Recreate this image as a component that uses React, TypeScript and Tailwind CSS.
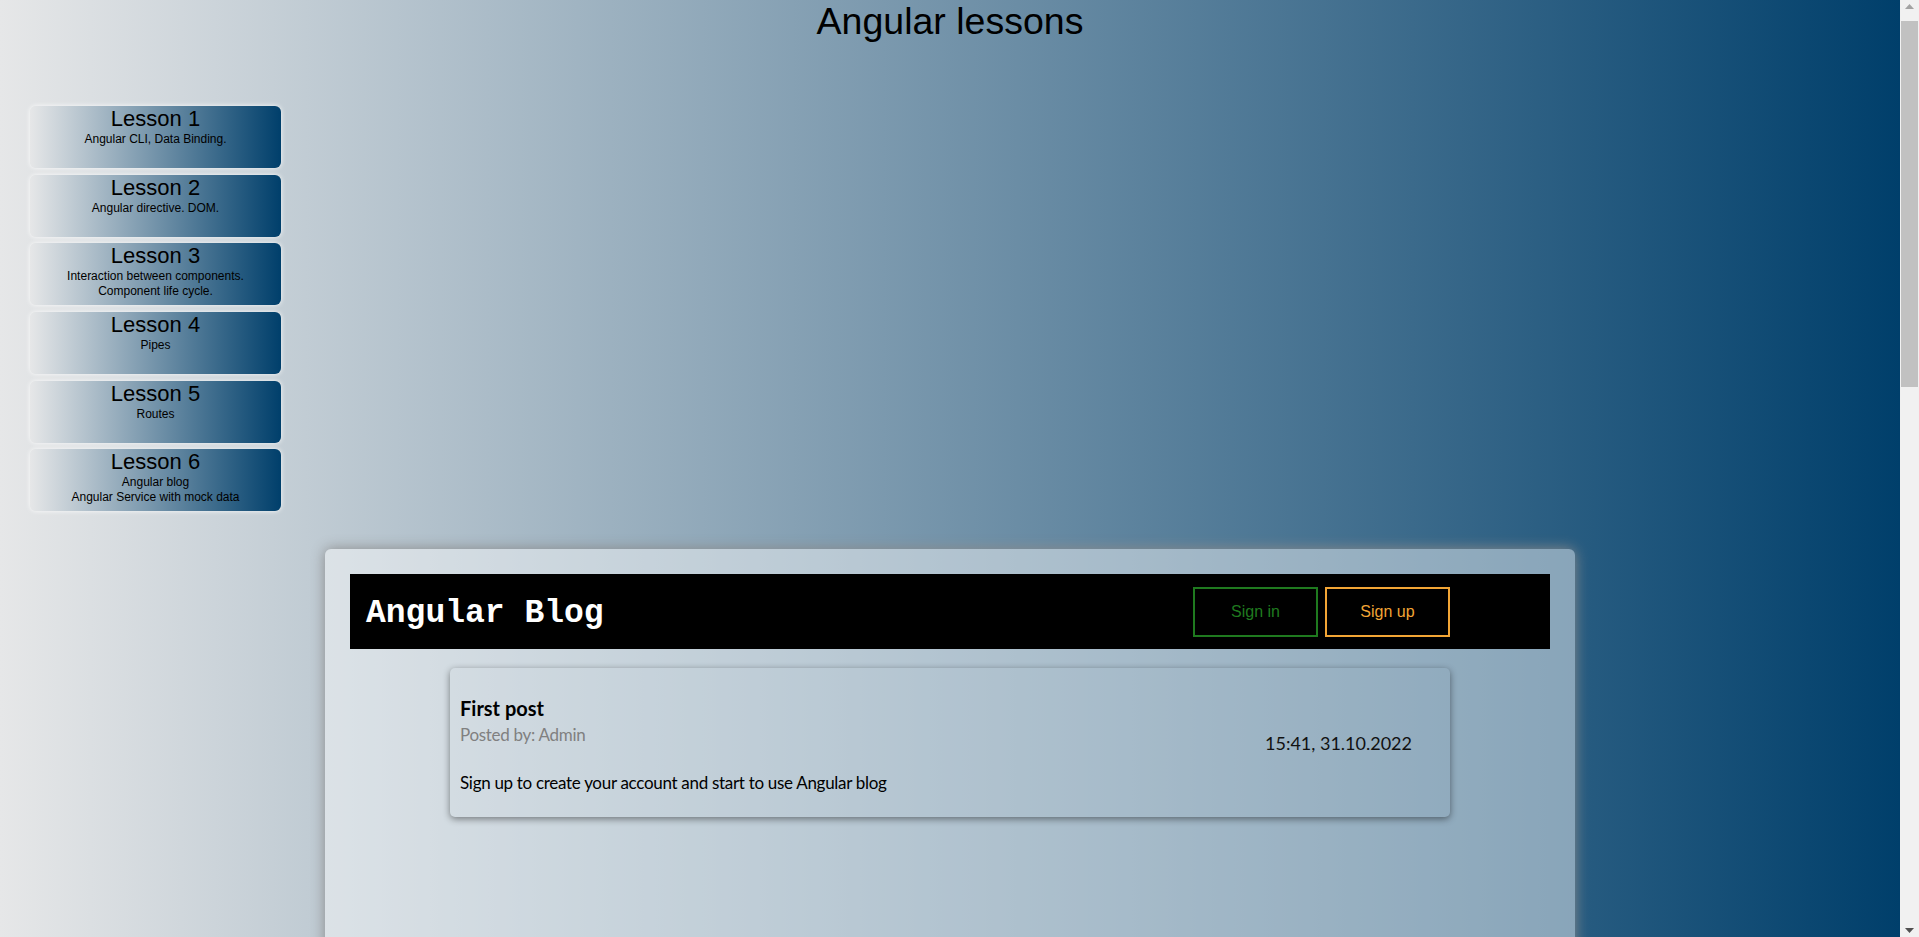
import React from "react";

const lessons: { title: string; lines: string[] }[] = [
  { title: "Lesson 1", lines: ["Angular CLI, Data Binding."] },
  { title: "Lesson 2", lines: ["Angular directive. DOM."] },
  { title: "Lesson 3", lines: ["Interaction between components.", "Component life cycle."] },
  { title: "Lesson 4", lines: ["Pipes"] },
  { title: "Lesson 5", lines: ["Routes"] },
  { title: "Lesson 6", lines: ["Angular blog", "Angular Service with mock data"] },
];

function Scrollbar() {
  return (
    <div className="fixed right-0 top-0 flex h-screen w-[19px] flex-col items-center bg-[#f1f1f1]">
      <svg width="9" height="5" viewBox="0 0 9 5" className="mt-[4px]">
        <polygon points="4.5,0 9,5 0,5" fill="#a3a3a3" />
      </svg>
      <div className="mt-[12px] h-[366px] w-[17px] bg-[#c1c1c1]" />
      <div className="flex-1" />
      <svg width="9" height="5" viewBox="0 0 9 5" className="mb-[4px]">
        <polygon points="0,0 9,0 4.5,5" fill="#505050" />
      </svg>
    </div>
  );
}

export default function App() {
  return (
    <div className="relative">
      <div
        className="mr-[19px] min-h-[2312px] bg-[linear-gradient(to_right,#e6e7e8,#003f6b)] text-black"
        style={{ fontFamily: '"Liberation Sans", Arial, sans-serif' }}
      >
        <div className="text-center text-[37.5px] leading-[42px]">Angular lessons</div>

        <div className="ml-[30px] mt-[64px] flex w-[251px] flex-col gap-[6.7px]">
          {lessons.map((l) => (
            <div
              key={l.title}
              className="h-[62px] rounded-[6px] bg-[linear-gradient(to_right,#e6e7e8,#003f6b)] text-center shadow-[0_0_5px_rgba(255,255,255,0.9)]"
            >
              <div className="text-[22px] leading-[26px]">{l.title}</div>
              {l.lines.map((t) => (
                <div key={t} className="text-[12px] leading-[15px]">
                  {t}
                </div>
              ))}
            </div>
          ))}
        </div>

        <div className="mx-auto mt-[37.7px] min-h-[1760px] w-[1250px] rounded-[6px] bg-white/45 p-[25px] shadow-[0_0_14px_#8a8a8a]">
          <div className="flex h-[75px] items-center justify-between bg-black pl-[16px] pr-[100px]">
            <div
              className="pt-[5px] text-[33px] font-bold text-white"
              style={{
                fontFamily:
                  '"Courier New", "Nimbus Mono PS", "Nimbus Mono L", FreeMono, "Liberation Mono", monospace',
              }}
            >
              Angular Blog
            </div>
            <div className="flex gap-[7px]">
              <button className="flex h-[50px] w-[125px] items-center justify-center border-2 border-[#1f7a1f] text-[16px] text-[#1f7a1f]">
                Sign in
              </button>
              <button className="flex h-[50px] w-[125px] items-center justify-center border-2 border-[#f2a535] text-[16px] text-[#f2a535]">
                Sign up
              </button>
            </div>
          </div>

          <div
            className="mx-auto mt-[19px] flex h-[149px] w-[1000px] rounded-[5px] shadow-[0_2px_7px_rgba(0,0,0,0.45)]"
            style={{ fontFamily: 'Lato, "Open Sans", sans-serif' }}
          >
            <div className="flex-1 pl-[10px] pt-[28px]">
              <div className="text-[20px] font-bold leading-[24px]">First post</div>
              <div className="mt-[4px] text-[17px] leading-[21px] tracking-[-0.3px] text-[#808080]">
                Posted by: Admin
              </div>
              <div className="mt-[27px] text-[17px] leading-[21px] tracking-[-0.3px]">
                Sign up to create your account and start to use Angular blog
              </div>
            </div>
            <div className="flex items-center pr-[38px] pt-[2px] text-[18px] text-[#111]">15:41, 31.10.2022</div>
          </div>
        </div>
      </div>
      <Scrollbar />
    </div>
  );
}
